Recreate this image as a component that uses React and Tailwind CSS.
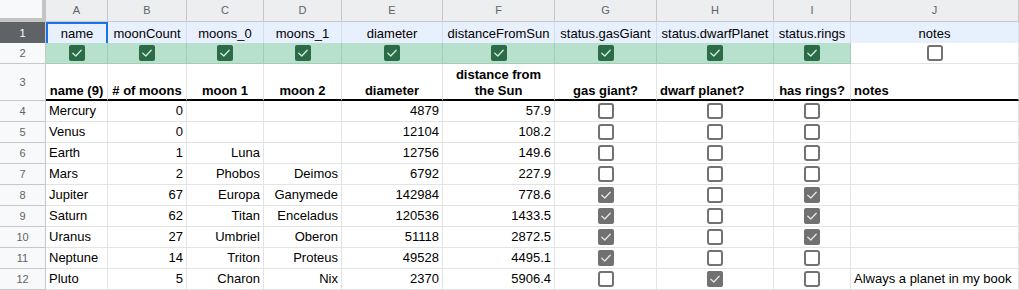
const cols = 'grid grid-cols-[46px_62px_79px_77px_78px_101px_112px_102px_117px_77px_168px]';

const fields = ['name', 'moonCount', 'moons_0', 'moons_1', 'diameter', 'distanceFromSun', 'status.gasGiant', 'status.dwarfPlanet', 'status.rings', 'notes'];

const planets = [
    ['Mercury', 0, '', '', 4879, '57.9', false, false, false, ''],
    ['Venus', 0, '', '', 12104, '108.2', false, false, false, ''],
    ['Earth', 1, 'Luna', '', 12756, '149.6', false, false, false, ''],
    ['Mars', 2, 'Phobos', 'Deimos', 6792, '227.9', false, false, false, ''],
    ['Jupiter', 67, 'Europa', 'Ganymede', 142984, '778.6', true, false, true, ''],
    ['Saturn', 62, 'Titan', 'Enceladus', 120536, '1433.5', true, false, true, ''],
    ['Uranus', 27, 'Umbriel', 'Oberon', 51118, '2872.5', true, false, true, ''],
    ['Neptune', 14, 'Triton', 'Proteus', 49528, '4495.1', true, false, false, ''],
    ['Pluto', 5, 'Charon', 'Nix', 2370, '5906.4', false, true, false, 'Always a planet in my book'],
];

const CheckBox = ({ checked, green }) => {
    if (!checked) {
        return <span className="block w-4 h-4 rounded-[3px] border-2 border-[#727272] bg-white" />;
    }
    return (
        <span className={`flex items-center justify-center w-4 h-4 rounded-[2px] ${green ? 'bg-[#2b6b48]' : 'bg-[#717171]'}`}>
            <svg className="w-4 h-4" viewBox="0 0 16 16" fill="none">
                <polyline points="3.8,8.3 6.8,11 12.2,5.2" stroke={green ? '#cfeedd' : '#e6e6e6'} strokeWidth="1.3" strokeLinecap="round" strokeLinejoin="round" />
            </svg>
        </span>
    );
};

const cell = 'border-r border-b border-[#e2e3e3] overflow-hidden whitespace-nowrap';
const rowHead = 'bg-[#f8f9fa] border-r border-b border-[#c7c7c7] flex items-center justify-center text-[11px] text-[#5f6368]';

const App = () => {
    return (
        <div className="w-[1019px] h-[290px] overflow-hidden bg-white text-[13px] text-black font-['Liberation_Sans',Arial,sans-serif]">
            {/* column letters */}
            <div className={`${cols} h-[22px]`}>
                <div className="bg-[#f8f9fa] border-r-4 border-b-4 border-[#c4c4c4]" />
                {'ABCDEFGHIJ'.split('').map((l) => (
                    <div key={l} className="bg-[#eceef0] border-r border-b border-[#c7c7c7] flex items-center justify-center text-[11px] text-[#5f6368]">
                        {l}
                    </div>
                ))}
            </div>

            {/* row 1: field names (selected) */}
            <div className={`${cols} h-[21px]`}>
                <div className="bg-[#5f6368] border-r border-b border-[#c7c7c7] flex items-center justify-center text-[11px] text-white">1</div>
                {fields.map((f, i) => (
                    <div
                        key={f}
                        className={
                            i === 0
                                ? 'bg-[#e8f0fe] border-2 border-[#1a73e8] flex items-center justify-center whitespace-nowrap'
                                : 'bg-[#e8f0fe] border-r border-[#d4dced] border-b border-b-[#1a73e8] flex items-center justify-center whitespace-nowrap overflow-hidden'
                        }
                    >
                        {f}
                    </div>
                ))}
            </div>

            {/* row 2: include checkboxes */}
            <div className={`${cols} h-[21px]`}>
                <div className={rowHead}>2</div>
                {fields.map((f, i) => (
                    <div
                        key={f}
                        className={`${i < 9 ? 'bg-[#b7e1cd] border-[#a3cdb9]' : 'bg-white border-[#e2e3e3]'} border-r border-b flex items-center justify-center`}
                    >
                        <CheckBox checked={i < 9} green />
                    </div>
                ))}
            </div>

            {/* row 3: display headers */}
            <div className={`${cols} h-[37px]`}>
                <div className={rowHead}>3</div>
                {['name (9)', '# of moons', 'moon 1', 'moon 2', 'diameter', 'distance from the Sun', 'gas giant?', 'dwarf planet?', 'has rings?', 'notes'].map((h, i) => (
                    <div
                        key={h}
                        className={`border-r border-r-[#e2e3e3] border-b-2 border-b-black flex items-end font-bold leading-[16px] ${
                            i === 7 || i === 9 ? 'justify-start px-[3px]' : 'justify-center text-center'
                        }`}
                    >
                        {i === 5 ? (
                            <span>
                                distance from
                                <br />
                                the Sun
                            </span>
                        ) : (
                            <span className="whitespace-nowrap">{h}</span>
                        )}
                    </div>
                ))}
            </div>

            {/* data rows */}
            {planets.map((p, r) => (
                <div key={p[0]} className={`${cols} h-[21px]`}>
                    <div className={rowHead}>{r + 4}</div>
                    <div className={`${cell} flex items-center px-[3px]`}>{p[0]}</div>
                    {[p[1], p[2], p[3], p[4], p[5]].map((v, i) => (
                        <div key={i} className={`${cell} flex items-center justify-end px-[3px]`}>
                            {v}
                        </div>
                    ))}
                    {[p[6], p[7], p[8]].map((v, i) => (
                        <div key={`c${i}`} className={`${cell} flex items-center justify-center`}>
                            <CheckBox checked={v} />
                        </div>
                    ))}
                    <div className={`${cell} flex items-center px-[3px]`}>{p[9]}</div>
                </div>
            ))}
        </div>
    );
};

export default App;
